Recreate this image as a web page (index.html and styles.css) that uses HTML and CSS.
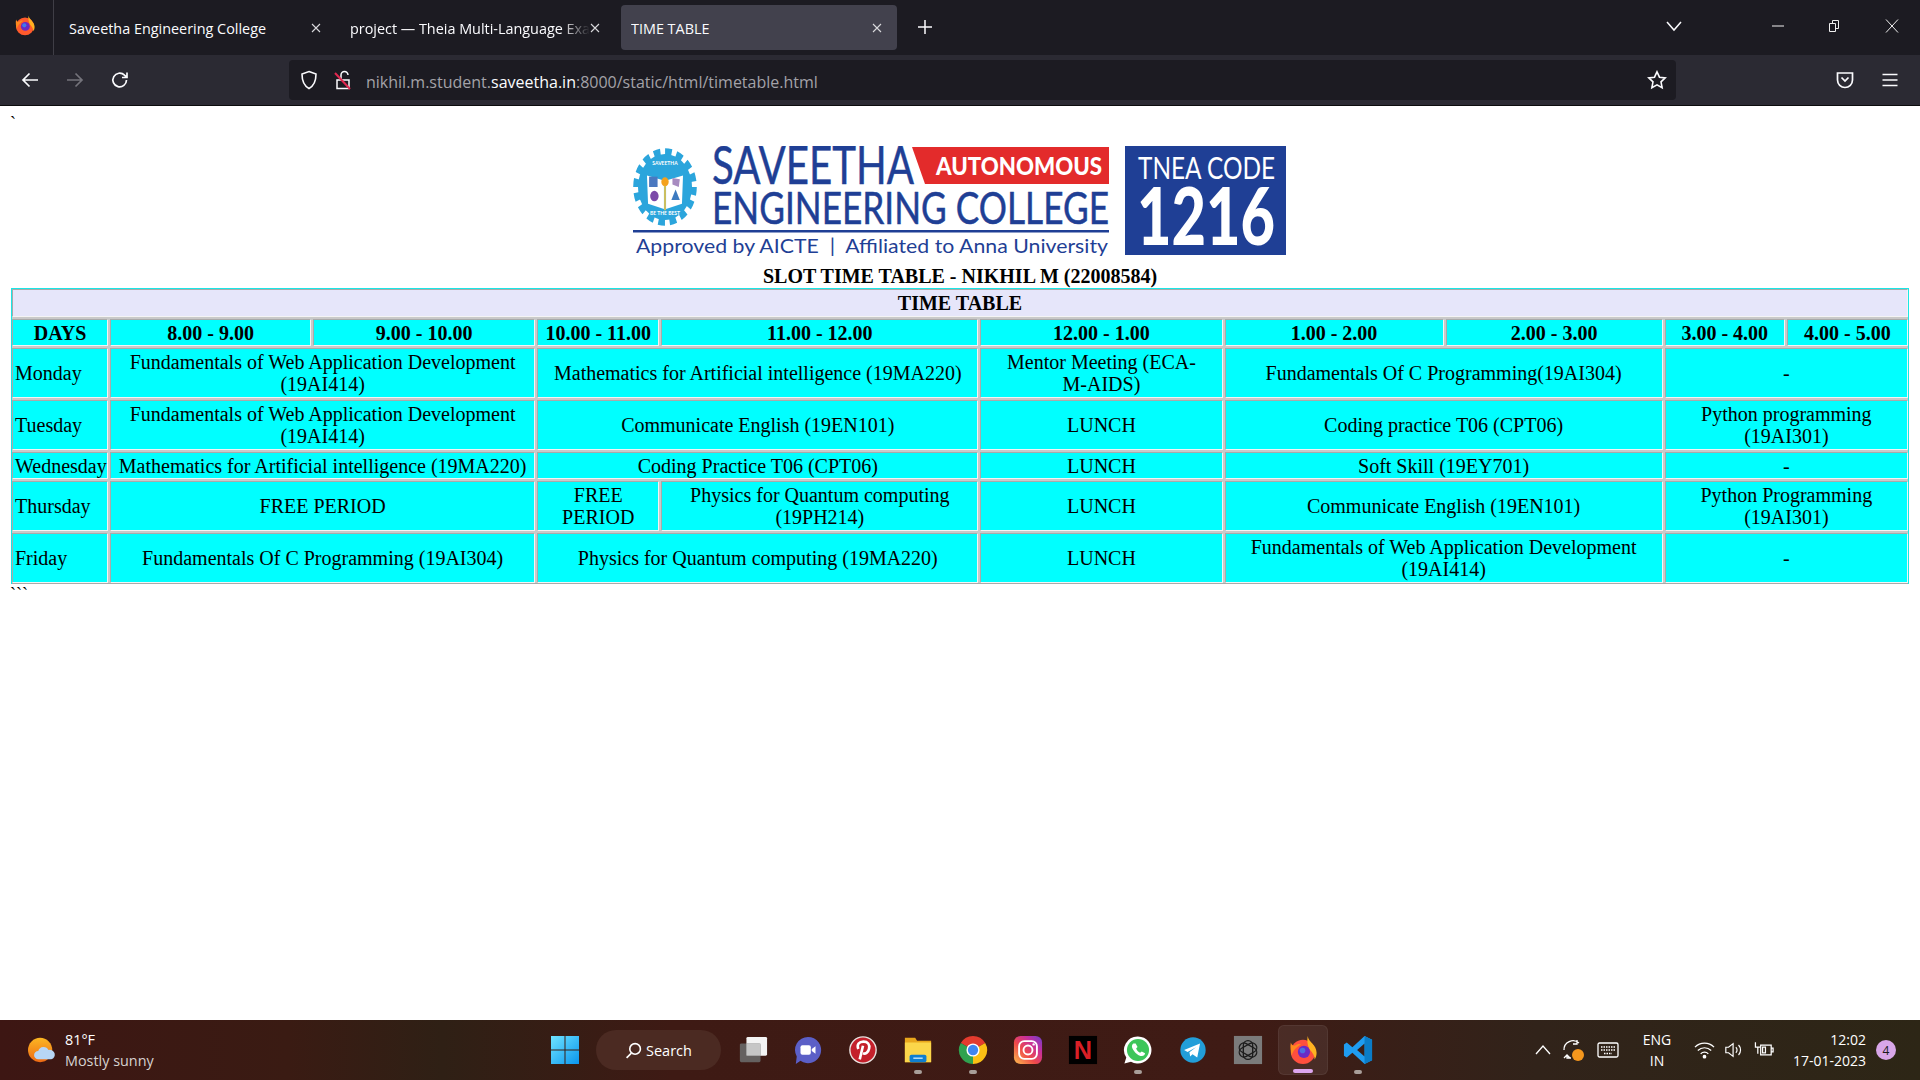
FILE: index.html
```
<!DOCTYPE html>
<html lang="en">
<head>
<meta charset="utf-8">
<title>TIME TABLE</title>
<link rel="stylesheet" href="styles.css">
</head>
<body>
<header class="browser">
  <div class="tabbar">
    <div class="brand">
      <svg class="ff-small" viewBox="0 0 32 32"><circle cx="16" cy="18" r="13" fill="#ff5a2c"/><path d="M21 2c1 6 9 9 9 17 0 2-.5 4-1.500 6-1-6-4-8-6-11-1-3-2-7-1.500-12z" fill="#ffb020"/><path d="M3 8c1 3 3 4 5 3 1-1 3-2 5-1-3 2-8 6-9 12-1-4-2-9-1-14z" fill="#ff8a1e"/><circle cx="16.500" cy="18" r="6.500" fill="#6a2bc4"/><circle cx="15" cy="16.500" r="3" fill="#3f7bea"/></svg>
    </div>
    <div class="tab tab-one"><span class="tab-title">Saveetha Engineering College</span><svg class="tab-x" viewBox="0 0 10 10"><path d="M1 1l8 8M9 1l-8 8"/></svg></div>
    <div class="tab tab-two"><span class="tab-title fade">project — Theia Multi-Language Exa</span><svg class="tab-x" viewBox="0 0 10 10"><path d="M1 1l8 8M9 1l-8 8"/></svg></div>
    <div class="tab tab-active"><span class="tab-title">TIME TABLE</span><svg class="tab-x" viewBox="0 0 10 10"><path d="M1 1l8 8M9 1l-8 8"/></svg></div>
    <svg class="plus" viewBox="0 0 16 16"><path d="M8 1v14M1 8h14"/></svg>
    <svg class="tab-list" viewBox="0 0 16 12"><path d="M1 2l7 8 7-8"/></svg>
    <div class="winctl">
      <svg viewBox="0 0 14 14"><path d="M1 7h12"/></svg>
      <svg viewBox="0 0 14 14"><path d="M1.500 4.500h6v8h-6zM4.500 4.500v-3h6v8h-3"/></svg>
      <svg viewBox="0 0 14 14"><path d="M1 .5l12 13M13 .5l-12 13"/></svg>
    </div>
  </div>
  <nav class="navbar">
    <svg class="nav-ico back" viewBox="0 0 20 20"><path d="M18 10H3M9.500 3.500L3 10l6.500 6.500"/></svg>
    <svg class="nav-ico fwd" viewBox="0 0 20 20"><path d="M2 10h15M10.500 3.500L17 10l-6.500 6.500"/></svg>
    <svg class="nav-ico reload" viewBox="0 0 20 20"><path d="M16.500 10a6.800 6.800 0 1 1-2-4.800L17 7.500M17 2.500v5h-5"/></svg>
    <div class="urlbar">
      <svg class="shield" viewBox="0 0 20 20"><path d="M10 1.500l7 2.500c0 7-1.500 11.500-7 14.500C4.500 15.500 3 11 3 4z"/></svg>
      <svg class="lock" viewBox="0 0 20 20"><path class="lock-body" d="M4 10h12v8.500H4zM8 10V5a3.500 3.500 0 0 1 7 0"/><path class="lock-slash" d="M2 3l15 16"/></svg>
      <span class="url">nikhil.m.student.<b>saveetha.in</b>:8000/static/html/timetable.html</span>
      <svg class="star" viewBox="0 0 20 20"><path d="M10 1.800l2.500 5.400 5.700.7-4.200 4 1.100 5.800-5.100-2.900-5.100 2.900 1.100-5.800-4.200-4 5.700-.7z"/></svg>
    </div>
    <svg class="nav-ico pocket" viewBox="0 0 20 20"><path d="M2.500 3h15v7a7.500 7.500 0 0 1-15 0zM6.500 7.500L10 11l3.500-3.500"/></svg>
    <svg class="nav-ico menu" viewBox="0 0 20 20"><path d="M2.500 4.500h15M2.500 10h15M2.500 15.500h15"/></svg>
  </nav>
</header>

<main class="page">
  <div class="tick">`</div>
  <svg class="logo" viewBox="0 0 654 110" role="img" aria-label="Saveetha Engineering College logo">
    <g transform="translate(32 41) scale(1.06 1.29)">
      <circle r="26" fill="none" stroke="#2ba5dc" stroke-width="8" stroke-dasharray="6 4.200"/>
      <circle r="25.500" fill="#2ba5dc"/>
      <path d="M-17-9l16 4v22l-15-4zM17-9l-16 4v22l15-4z" fill="#fff"/>
      <rect x="-15" y="-8" width="8" height="8" fill="#4a78c0"/>
      <circle cx="-10" cy="7" r="4" fill="#7b4aa8"/>
      <path d="M7-7l7 1-1 6-6-2z" fill="#a78bc0"/>
      <path d="M10 2l4 8-8 0z" fill="#3c7ac0"/>
      <circle cx="0" cy="-4" r="3.500" fill="#f4a21d"/>
      <path d="M-.8-1h1.600v19h-1.600z" fill="#e8c34a"/>
    </g>
    <text class="lg-mini" x="32" y="19" text-anchor="middle">SAVEETHA</text>
    <text class="lg-mini" x="32" y="69" text-anchor="middle">BE THE BEST</text>
    <path d="M279 1h197v37H292z" fill="#e32b2b"/>
    <text class="lg-a" transform="translate(79 38) scale(1 1.19)" textLength="202" lengthAdjust="spacingAndGlyphs">SAVEETHA</text>
    <text class="lg-au" x="303" y="29" textLength="166" lengthAdjust="spacingAndGlyphs">AUTONOMOUS</text>
    <text class="lg-e" transform="translate(79 78) scale(1 1.3)" textLength="397" lengthAdjust="spacingAndGlyphs">ENGINEERING COLLEGE</text>
    <rect x="0" y="84" width="476" height="2.500" fill="#1f3f95"/>
    <text class="lg-b" x="3" y="107" textLength="472" lengthAdjust="spacingAndGlyphs">Approved by AICTE  |  Affiliated to Anna University</text>
    <rect x="492" y="0" width="161" height="109" fill="#1f3f95"/>
    <text class="lg-t" transform="translate(505 33) scale(1 1.2)" textLength="137" lengthAdjust="spacingAndGlyphs">TNEA CODE</text>
    <text class="lg-n" transform="translate(504 99) scale(1 1.34)" textLength="138" lengthAdjust="spacingAndGlyphs">1216</text>
  </svg>
  <h1 class="slot">SLOT TIME TABLE - NIKHIL M (22008584)</h1>
  <table class="tt">
    <colgroup>
      <col class="c0"><col class="c1"><col class="c2"><col class="c3"><col class="c4"><col class="c5"><col class="c6"><col class="c7"><col class="c8"><col class="c9">
    </colgroup>
    <tr><th class="title" colspan="10">TIME TABLE</th></tr>
    <tr><th>DAYS</th><th>8.00 - 9.00</th><th>9.00 - 10.00</th><th>10.00 - 11.00</th><th>11.00 - 12.00</th><th>12.00 - 1.00</th><th>1.00 - 2.00</th><th>2.00 - 3.00</th><th>3.00 - 4.00</th><th>4.00 - 5.00</th></tr>
    <tr><td class="day">Monday</td><td colspan="2">Fundamentals of Web Application Development (19AI414)</td><td colspan="2">Mathematics for Artificial intelligence (19MA220)</td><td class="mentor">Mentor Meeting (ECA-M-AIDS)</td><td colspan="2">Fundamentals Of C Programming(19AI304)</td><td colspan="2">-</td></tr>
    <tr><td class="day">Tuesday</td><td colspan="2">Fundamentals of Web Application Development (19AI414)</td><td colspan="2">Communicate English (19EN101)</td><td>LUNCH</td><td colspan="2">Coding practice T06 (CPT06)</td><td colspan="2">Python programming (19AI301)</td></tr>
    <tr><td class="day">Wednesday</td><td colspan="2">Mathematics for Artificial intelligence (19MA220)</td><td colspan="2">Coding Practice T06 (CPT06)</td><td>LUNCH</td><td colspan="2">Soft Skill (19EY701)</td><td colspan="2">-</td></tr>
    <tr><td class="day">Thursday</td><td colspan="2">FREE PERIOD</td><td>FREE PERIOD</td><td>Physics for Quantum computing (19PH214)</td><td>LUNCH</td><td colspan="2">Communicate English (19EN101)</td><td colspan="2">Python Programming (19AI301)</td></tr>
    <tr><td class="day">Friday</td><td colspan="2">Fundamentals Of C Programming (19AI304)</td><td colspan="2">Physics for Quantum computing (19MA220)</td><td>LUNCH</td><td colspan="2">Fundamentals of Web Application Development (19AI414)</td><td colspan="2">-</td></tr>
  </table>
  <div class="tick">```</div>
</main>

<footer class="taskbar">
  <div class="weather">
    <svg class="wx" viewBox="0 0 30 30"><defs><linearGradient id="sun" x1="0" y1="0" x2="0" y2="1"><stop offset="0" stop-color="#fbb622"/><stop offset="1" stop-color="#ee6a14"/></linearGradient></defs><circle cx="13" cy="15" r="13" fill="url(#sun)"/><path d="M11 25a4.500 4.500 0 0 1 0-9 6 6 0 0 1 11-1 5 5 0 0 1 3 10z" fill="#b7d6f5"/></svg>
    <div class="wx-text"><span class="wx-temp">81°F</span><span class="wx-desc">Mostly sunny</span></div>
  </div>
  <div class="center">
    <svg class="start" viewBox="0 0 30 30"><defs><linearGradient id="win" x1="0" y1="0" x2="1" y2="1"><stop offset="0" stop-color="#6fe4ff"/><stop offset="1" stop-color="#0a95ee"/></linearGradient></defs><path fill="url(#win)" d="M1 1h13.500v13.500H1zM15.500 1H29v13.500H15.500zM1 15.500h13.500V29H1zM15.500 15.500H29V29H15.500z"/></svg>
    <div class="search"><svg viewBox="0 0 16 16"><circle cx="9.500" cy="6.500" r="5"/><path d="M6 10.500L1.500 15"/></svg><span>Search</span></div>
    <div class="slot-i"><svg viewBox="0 0 32 32"><rect x="9" y="2" width="22" height="20" rx="1.500" fill="#f3f3f3"/><rect x="2" y="9" width="22" height="20" rx="1.500" fill="#6b6b6b" fill-opacity=".88"/><rect x="9" y="9" width="15" height="13" fill="#c6c6c6"/></svg></div>
    <div class="slot-i"><svg viewBox="0 0 32 32"><path d="M16 2a14 14 0 1 1-8 25.500L3 31l1-8A14 14 0 0 1 16 2z" fill="#5b5fc7"/><rect x="8" y="11" width="11" height="10" rx="2" fill="#fff"/><path d="M20 15l4-3v8l-4-3z" fill="#fff"/></svg></div>
    <div class="slot-i"><svg viewBox="0 0 32 32"><circle cx="16" cy="16" r="14" fill="#c4202b" stroke="#e9e3e0" stroke-width="1.500"/><path d="M11 15c-2-5 1-8 5.500-8s7 3 6 7.500-4 6-6.500 5M16 11.500L12.500 26" fill="none" stroke="#fff" stroke-width="2.800"/></svg></div>
    <div class="slot-i on"><svg viewBox="0 0 32 32"><path d="M2 3h11l2 3h15v23H2z" fill="#e9a71c"/><path d="M2 8h28v21H2z" fill="#fbd64a"/><rect x="7" y="21" width="18" height="8" rx="2" fill="#0f7ed0"/><rect x="11" y="24" width="10" height="1.500" fill="#bfe3fb"/></svg></div>
    <div class="slot-i on"><svg viewBox="0 0 32 32"><path d="M16 16L3 8.500A15 15 0 0 1 29 8.500z" fill="#e33b2e"/><path d="M16 16l13-7.500A15 15 0 0 1 16 31z" fill="#fbc014"/><path d="M16 16V31A15 15 0 0 1 3 8.500z" fill="#2fa24f"/><circle cx="16" cy="16" r="7" fill="#fff"/><circle cx="16" cy="16" r="5.500" fill="#3f86f0"/></svg></div>
    <div class="slot-i"><svg viewBox="0 0 32 32"><defs><linearGradient id="ig" x1="0" y1="1" x2="1" y2="0"><stop offset="0" stop-color="#fdc14e"/><stop offset=".4" stop-color="#ef4a4a"/><stop offset=".7" stop-color="#c72f9c"/><stop offset="1" stop-color="#6a3fd0"/></linearGradient></defs><rect x="1" y="1" width="30" height="30" rx="7" fill="url(#ig)"/><rect x="6.500" y="6.500" width="19" height="19" rx="5.500" fill="none" stroke="#fff" stroke-width="2"/><circle cx="16" cy="16" r="4.800" fill="none" stroke="#fff" stroke-width="2"/><circle cx="22" cy="10" r="1.300" fill="#fff"/></svg></div>
    <div class="slot-i"><svg viewBox="0 0 32 32"><rect x="1" y="1" width="30" height="30" fill="#000"/><text class="nf" x="16" y="26" text-anchor="middle">N</text></svg></div>
    <div class="slot-i on"><svg viewBox="0 0 32 32"><path d="M16 1.500a14.500 14.500 0 1 1-7.500 27L1.500 30.500l2-6.500A14.500 14.500 0 0 1 16 1.500z" fill="#fff"/><circle cx="16" cy="16" r="11.800" fill="#3dc65a"/><path d="M11 9c-2 1.500-2 4 0 7s5.500 6.500 9 6.500c2 0 3.500-1.500 3.500-3l-3.500-2-1.800 1.500c-2-1-3.500-2.500-4.200-4.500l1.500-1.800L13.500 9z" fill="#fff"/></svg></div>
    <div class="slot-i"><svg viewBox="0 0 32 32"><circle cx="16" cy="16" r="13.500" fill="#229ed9"/><path d="M6.500 16l17-7-3 15-5-3.500-2.500 2.500-.8-4.500 7-5.500-9 5z" fill="#fff"/></svg></div>
    <div class="slot-i"><svg viewBox="0 0 32 32"><rect x="1" y="1" width="30" height="30" fill="#7b7b7b"/><g fill="none" stroke="#1c1c1c" stroke-width="1.400"><rect x="11" y="6" width="10" height="20" rx="5"/><rect x="11" y="6" width="10" height="20" rx="5" transform="rotate(60 16 16)"/><rect x="11" y="6" width="10" height="20" rx="5" transform="rotate(120 16 16)"/></g></svg></div>
    <div class="slot-i active"><svg viewBox="0 0 32 32"><circle cx="16" cy="18" r="13" fill="#ff4f3e"/><path d="M21 1c1 7 9.500 9 9.500 18 0 3-.8 5-2 7-.5-6-4-8-6-11.500-1.500-3.500-2.500-8-1.500-13.500z" fill="#ffb321"/><path d="M3 8c1 3 3 4 5 3 1.500-1 3-2 6-1-4 2-9 6-10 12-1-4-2-9-1-14z" fill="#ff8a1e"/><circle cx="17" cy="18" r="6.500" fill="#6a2bc4"/><circle cx="15.500" cy="16.500" r="3" fill="#4c6fe0"/></svg></div>
    <div class="slot-i on"><svg viewBox="0 0 32 32"><path d="M23 1l8 4v22l-8 4-13-12-6 5-3-2V10l3-2 6 5zM23 9l-8 7 8 7z" fill="#1f9cf0"/><path d="M23 1l8 4v22l-8 4z" fill="#0a7cc7"/></svg></div>
  </div>
  <div class="tray">
    <svg class="t-chev" viewBox="0 0 16 10"><path d="M1 9l7-8 7 8"/></svg>
    <svg class="t-sync" viewBox="0 0 24 24"><path d="M3 12a9 9 0 0 1 15-7M16 2v4h-4M3 20l3-3 3 3M6 17v3h4"/><circle class="t-dot" cx="17" cy="17" r="6"/></svg>
    <svg class="t-kbd" viewBox="0 0 22 16"><rect x="1" y="1" width="20" height="14" rx="1.500"/><path d="M4 5h14M4 8h14M7 11.500h8" stroke-dasharray="1.500 1"/></svg>
    <div class="lang"><span>ENG</span><span>IN</span></div>
    <svg class="t-wifi" viewBox="0 0 22 18"><path d="M1 6a14 14 0 0 1 20 0M4 9.500a10 10 0 0 1 14 0M7 13a5.500 5.500 0 0 1 8 0"/><circle cx="11" cy="16" r="1.300" fill="#fff"/></svg>
    <svg class="t-vol" viewBox="0 0 22 18"><path d="M2 6h3l5-4v14l-5-4H2zM13 6a4 4 0 0 1 0 6M16 3.500a8 8 0 0 1 0 11"/></svg>
    <svg class="t-bat" viewBox="0 0 22 18"><path d="M7 4h11v10H7zM18 7h2v4h-2z"/><path class="t-fill" d="M1.500 1v5h5M4 6v7M9 6h3v6H9z"/></svg>
    <div class="clock"><span>12:02</span><span>17-01-2023</span></div>
    <div class="badge">4</div>
  </div>
</footer>
</body>
</html>
```
FILE: styles.css
```
* { box-sizing: border-box; }
html, body { height: 100%; }
body {
  margin: 0;
  display: flex;
  flex-direction: column;
  background: #fff;
  color: #000;
  font-family: "Liberation Serif", "Times New Roman", serif;
  overflow: hidden;
}
svg { display: block; flex: none; }

/* browser chrome */
.browser { flex: none; font-family: "Open Sans", "Noto Sans", sans-serif; color: #fbfbfe; }
.tabbar { height: 55px; background: #1c1b22; display: flex; align-items: flex-start; }
.brand { width: 54px; height: 55px; border-right: 1px solid #3f3e46; display: flex; align-items: center; justify-content: center; }
.ff-small { width: 22px; height: 24px; margin: -5px 3px 0 0; }
.tab { height: 45px; margin-top: 5px; display: flex; align-items: center; font-size: 14.400px; padding-top: 1px; }
.tab-title { white-space: nowrap; overflow: hidden; flex: 1; }
.tab-one { width: 282px; padding-left: 15px; padding-right: 15px; }
.tab-two { width: 276px; padding-left: 14px; margin-right: 9px; }
.tab-two .tab-title { flex: none; width: 240px; }
.fade { mask-image: linear-gradient(90deg, #000 88%, transparent 100%); -webkit-mask-image: linear-gradient(90deg, #000 88%, transparent 100%); }
.tab-active { width: 276px; padding-left: 10px; padding-right: 15px; background: #42414d; border-radius: 4px; }
.tab-x { width: 10px; height: 10px; fill: none; stroke: #d9d9dc; stroke-width: 1.100; margin-top: -1px; }
.plus { width: 16px; height: 16px; margin: 19px 0 0 20px; fill: none; stroke: #fbfbfe; stroke-width: 1.500; }
.tab-list { width: 16px; height: 12px; margin: 20px 0 0 733px; fill: none; stroke: #fbfbfe; stroke-width: 1.500; }
.winctl { display: flex; gap: 43px; margin: 19px 0 0 auto; padding-right: 21px; }
.winctl svg { width: 14px; height: 14px; fill: none; stroke: #f0f0f0; stroke-width: 1; }

.navbar { height: 51px; background: #2b2a33; border-bottom: 1px solid #0c0c0d; display: flex; align-items: center; }
.nav-ico { width: 20px; height: 20px; fill: none; stroke: #fbfbfe; stroke-width: 1.700; }
.back { margin-left: 20px; }
.fwd { margin-left: 25px; stroke: #74737b; }
.reload { margin-left: 25px; }
.urlbar { width: 1387px; height: 40px; margin-left: 159px; background: #1c1b22; border-radius: 4px; display: flex; align-items: center; padding: 0 9px 0 10px; }
.shield { width: 20px; height: 20px; fill: none; stroke: #fbfbfe; stroke-width: 1.600; }
.lock { width: 20px; height: 20px; margin-left: 14px; fill: none; stroke-width: 1.500; }
.lock-body { stroke: #fbfbfe; }
.lock-slash { stroke: #e22850; stroke-width: 2; }
.url { margin-left: 13px; padding-top: 4px; font-size: 16px; color: #a3a2a8; white-space: nowrap; flex: 1; }
.url b { font-weight: 400; color: #fbfbfe; }
.star { width: 20px; height: 20px; fill: none; stroke: #fbfbfe; stroke-width: 1.600; }
.pocket { margin-left: 159px; }
.menu { margin-left: 25px; }

/* page */
.page { flex: 1; min-height: 0; padding: 8px 10px 0; }
.tick { font-size: 18px; line-height: 18px; }
.logo { width: 654px; height: 110px; margin: 14px auto 10px; }
.logo text { font-family: "Lato", "Liberation Sans", sans-serif; }
.logo .lg-a { font-size: 44px; fill: #1f3f95; font-weight: 400; stroke: #1f3f95; stroke-width: .4px; }
.logo .lg-e { font-size: 34px; fill: #1f3f95; font-weight: 400; stroke: #1f3f95; stroke-width: .4px; }
.logo .lg-au { font-size: 24px; fill: #fff; font-weight: 900; }
.logo .lg-b { font-size: 20px; fill: #1f3f95; font-weight: 400; white-space: pre; }
.logo .lg-t { font-size: 25px; fill: #fff; font-weight: 400; }
.logo .lg-n { font-size: 60px; fill: #fff; font-weight: 900; }
.logo .lg-mini { font-size: 5px; fill: #fff; font-weight: 700; }
.slot { margin: 0; font-size: 20px; line-height: 21px; text-align: center; font-weight: 700; }

/* table */
.tt {
  width: 100%;
  table-layout: fixed;
  border-collapse: separate;
  border-spacing: 2px;
  font-size: 20px;
  line-height: 22px;
  background:
    linear-gradient(#19e6e6, #19e6e6) 1px 1px / calc(100% - 2px) 1px no-repeat,
    linear-gradient(#19e6e6, #19e6e6) 1px 1px / 1px calc(100% - 2px) no-repeat,
    linear-gradient(#19e6e6, #19e6e6) calc(100% - 1px) 1px / 1px calc(100% - 2px) no-repeat,
    linear-gradient(#a9a9a9, #a9a9a9) 1px calc(100% - 1px) / calc(100% - 2px) 1px no-repeat,
    linear-gradient(#c9c9c9, #c9c9c9) 2px 2px / calc(100% - 4px) calc(100% - 4px) no-repeat;
}
.c0 { width: 96px; } .c1 { width: 201px; } .c2 { width: 222px; } .c3 { width: 122px; } .c4 { width: 317px; }
.c5 { width: 242px; } .c6 { width: 219px; } .c7 { width: 217px; } .c8 { width: 120px; } .c9 { width: 121px; }
.tt th, .tt td {
  background: #0ff;
  border: 1px solid;
  border-color: #a9a9a9 #f4f4f4 #f4f4f4 #a9a9a9;
  padding: 1.850px 1px;
  text-align: center;
  vertical-align: middle;
}
.tt .title { background: #e6e6fa; }
.tt .day { text-align: left; padding-left: 2px; white-space: nowrap; }
.tt .mentor { padding-left: 16px; padding-right: 16px; }

/* taskbar */
.taskbar {
  flex: none;
  height: 60px;
  display: flex;
  align-items: center;
  font-family: "Open Sans", "Noto Sans", sans-serif;
  color: #fff;
  background: linear-gradient(90deg, #3d1613 0%, #3a1b13 15%, #2f2015 23%, #3e1a14 35%, #3f1b15 65%, #31231a 80%, #2d2616 100%);
}
.weather { width: 550px; display: flex; align-items: center; padding-left: 28px; }
.wx { width: 28px; height: 30px; }
.wx-text { display: flex; flex-direction: column; margin-left: 9px; font-size: 14.400px; line-height: 21px; }
.wx-desc { color: #d6d2d0; }
.center { display: flex; align-items: center; height: 60px; }
.start { width: 30px; height: 30px; }
.search { width: 125px; height: 40px; margin: 0 7px 0 16px; background: #4b2a22; border-radius: 20px; display: flex; align-items: center; justify-content: center; gap: 4px; font-size: 14.500px; }
.search svg { width: 17px; height: 17px; fill: none; stroke: #fff; stroke-width: 1.500; }
.slot-i { width: 50px; height: 50px; margin-right: 5px; border-radius: 6px; display: flex; align-items: center; justify-content: center; position: relative; }
.slot-i svg { width: 30px; height: 30px; }
.nf { font-family: "Liberation Sans", sans-serif; font-weight: 700; font-size: 27px; fill: #d81f26; }
.slot-i.on::after, .slot-i.active::after { content: ""; position: absolute; left: 50%; bottom: 1px; width: 8px; height: 4px; margin-left: -4px; border-radius: 2px; background: #a89e99; }
.slot-i.active { background: rgba(255,255,255,.07); border: 1px solid rgba(255,255,255,.06); }
.slot-i.active::after { width: 20px; margin-left: -10px; background: #dca6ee; }
.tray { margin-left: auto; display: flex; align-items: center; height: 60px; padding-right: 24px; }
.tray svg { fill: none; stroke: #fff; stroke-width: 1.300; }
.t-chev { width: 16px; height: 10px; }
.t-sync { width: 24px; height: 24px; margin-left: 10px; }
.tray .t-dot { fill: #f5971d; stroke: none; }
.t-kbd { width: 22px; height: 16px; margin-left: 12px; }
.lang { width: 60px; margin-left: 8px; display: flex; flex-direction: column; align-items: center; font-size: 14px; line-height: 21px; }
.t-wifi { width: 21px; height: 18px; margin-left: 7px; }
.t-vol { width: 20px; height: 18px; margin-left: 9px; }
.t-bat { width: 21px; height: 18px; margin-left: 10px; }
.clock { width: 81px; margin-left: 10px; display: flex; flex-direction: column; align-items: flex-end; font-size: 14px; line-height: 21px; }
.badge { width: 20px; height: 20px; margin-left: 10px; border-radius: 50%; background: #d8a6e8; color: #1a1a1a; font-size: 12px; display: flex; align-items: center; justify-content: center; }
```
